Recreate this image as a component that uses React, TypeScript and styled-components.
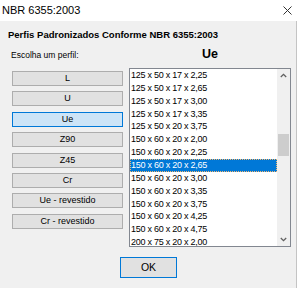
import React from "react";
import styled, { createGlobalStyle } from "styled-components";

const Global = createGlobalStyle`
  html, body { margin: 0; padding: 0; background: #ffffff; }
  * { box-sizing: border-box; }
`;

const Window = styled.div`
  width: 300px;
  height: 288px;
  display: flex;
  flex-direction: column;
  background: #ffffff;
  font-family: "Liberation Sans", Arial, sans-serif;
  color: #000;
  overflow: hidden;
`;

const TitleBar = styled.div`
  height: 21px;
  flex: 0 0 21px;
  display: flex;
  align-items: center;
  justify-content: space-between;
  padding: 0 8px 0 2px;
  font-size: 11px;
  line-height: 21px;
  background: #ffffff;
`;

const Dialog = styled.div`
  width: 297px;
  flex: 1;
  background: #f0f0f0;
  border-right: 1px solid #c4c4c4;
  display: flex;
  flex-direction: column;
`;

const Header = styled.div`
  padding: 8px 0 0 8px;
  font-size: 9.5px;
  font-weight: bold;
  line-height: 12px;
`;

const Content = styled.div`
  display: flex;
  padding-left: 12px;
  gap: 6px;
`;

const LeftCol = styled.div`
  width: 111px;
  display: flex;
  flex-direction: column;
  padding-top: 8px;
`;

const Label = styled.div`
  font-size: 8.5px;
  line-height: 12px;
  margin-left: -1px;
  margin-bottom: 10px;
`;

const ButtonStack = styled.div`
  display: flex;
  flex-direction: column;
  gap: 5.4px;
`;

const ProfileButton = styled.div<{ $active?: boolean }>`
  height: 15px;
  border: 1px solid ${(p) => (p.$active ? "#0078d7" : "#adadad")};
  background: ${(p) => (p.$active ? "#cce4f7" : "#e1e1e1")};
  font-size: 9px;
  line-height: 13px;
  text-align: center;
  color: #000;
`;

const RightCol = styled.div`
  width: 162px;
  display: flex;
  flex-direction: column;
  padding-top: 5.5px;
`;

const ProfileTitle = styled.div`
  font-size: 12.5px;
  font-weight: bold;
  line-height: 15px;
  text-align: center;
  margin-bottom: 6.5px;
`;

const ListBox = styled.div`
  height: 179px;
  border: 1px solid #828790;
  background: #ffffff;
  display: flex;
`;

const Items = styled.div`
  flex: 1;
  overflow: hidden;
`;

const Item = styled.div<{ $selected?: boolean }>`
  height: 12.86px;
  line-height: 12.86px;
  padding-left: 1px;
  font-size: 9px;
  letter-spacing: -0.25px;
  white-space: nowrap;
  color: ${(p) => (p.$selected ? "#ffffff" : "#000000")};
  background: ${(p) => (p.$selected ? "#0078d7" : "transparent")};
  outline: ${(p) => (p.$selected ? "1px dotted #f4b870" : "none")};
  outline-offset: -1px;
`;

const ScrollBar = styled.div`
  width: 13px;
  background: #f0f0f0;
  display: flex;
  flex-direction: column;
`;

const Arrow = styled.div`
  height: 13px;
  display: flex;
  align-items: center;
  justify-content: center;
`;

const Track = styled.div`
  flex: 1;
`;

const Thumb = styled.div`
  height: 22px;
  background: #cdcdcd;
  margin: 0 1px;
`;

const Footer = styled.div`
  display: flex;
  padding: 10px 0 0 120px;
`;

const OkButton = styled.div`
  width: 57px;
  height: 21px;
  border: 1px solid #0078d7;
  background: #e1e1e1;
  font-size: 10.5px;
  line-height: 19px;
  text-align: center;
`;

const profiles = ["L", "U", "Ue", "Z90", "Z45", "Cr", "Ue - revestido", "Cr - revestido"];

const items = [
  "125 x 50 x 17 x 2,25",
  "125 x 50 x 17 x 2,65",
  "125 x 50 x 17 x 3,00",
  "125 x 50 x 17 x 3,35",
  "125 x 50 x 20 x 3,75",
  "150 x 60 x 20 x 2,00",
  "150 x 60 x 20 x 2,25",
  "150 x 60 x 20 x 2,65",
  "150 x 60 x 20 x 3,00",
  "150 x 60 x 20 x 3,35",
  "150 x 60 x 20 x 3,75",
  "150 x 60 x 20 x 4,25",
  "150 x 60 x 20 x 4,75",
  "200 x 75 x 20 x 2,00",
];

const Chevron = ({ up }: { up?: boolean }) => (
  <svg width="7" height="5" viewBox="0 0 7 5">
    <path
      d={up ? "M0.8 4 L3.5 1.3 L6.2 4" : "M0.8 1 L3.5 3.7 L6.2 1"}
      fill="none"
      stroke="#606060"
      strokeWidth="1.3"
    />
  </svg>
);

const CloseIcon = () => (
  <svg width="9" height="9" viewBox="0 0 9 9">
    <path d="M0.5 0.5 L8.5 8.5 M8.5 0.5 L0.5 8.5" stroke="#333" strokeWidth="1" fill="none" />
  </svg>
);

export default function App() {
  return (
    <>
      <Global />
      <Window>
        <TitleBar>
          <span>NBR 6355:2003</span>
          <CloseIcon />
        </TitleBar>
        <Dialog>
          <Header>Perfis Padronizados Conforme NBR 6355:2003</Header>
          <Content>
            <LeftCol>
              <Label>Escolha um perfil:</Label>
              <ButtonStack>
                {profiles.map((p) => (
                  <ProfileButton key={p} $active={p === "Ue"}>
                    {p}
                  </ProfileButton>
                ))}
              </ButtonStack>
            </LeftCol>
            <RightCol>
              <ProfileTitle>Ue</ProfileTitle>
              <ListBox>
                <Items>
                  {items.map((it, i) => (
                    <Item key={i} $selected={i === 7}>
                      {it}
                    </Item>
                  ))}
                </Items>
                <ScrollBar>
                  <Arrow>
                    <Chevron up />
                  </Arrow>
                  <Track>
                    <Thumb style={{ marginTop: 52 }} />
                  </Track>
                  <Arrow>
                    <Chevron />
                  </Arrow>
                </ScrollBar>
              </ListBox>
            </RightCol>
          </Content>
          <Footer>
            <OkButton>OK</OkButton>
          </Footer>
        </Dialog>
      </Window>
    </>
  );
}
